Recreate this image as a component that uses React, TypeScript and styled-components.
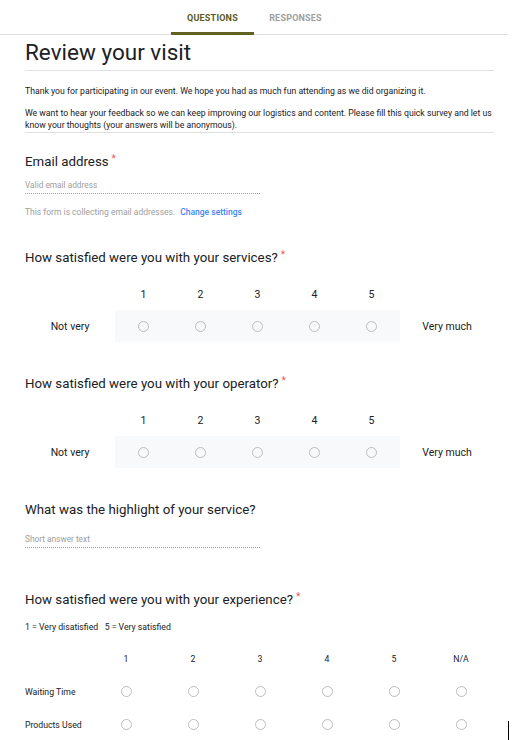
import React from "react";
import styled, { createGlobalStyle } from "styled-components";

const GlobalStyle = createGlobalStyle`
  body {
    margin: 0;
    background: #fff;
    font-family: Roboto, "Liberation Sans", Arial, sans-serif;
    color: #212121;
  }
`;

const Page = styled.div`
  width: 508px;
`;

const TabBar = styled.div`
  display: flex;
  justify-content: center;
  height: 34px;
  border-bottom: 1px solid #e0e0e0;
`;

const Tab = styled.div<{ $active?: boolean }>`
  width: 83px;
  display: flex;
  align-items: center;
  justify-content: center;
  font-size: 9px;
  font-weight: 700;
  letter-spacing: 0.2px;
  color: ${(p) => (p.$active ? "#5b5b1e" : "#9e9e9e")};
  border-bottom: 3px solid ${(p) => (p.$active ? "#616122" : "transparent")};
  margin-bottom: -1px;
  padding-top: 3px;
`;

const Content = styled.div`
  padding: 0 14px 0 25px;
`;

const Title = styled.h1`
  margin: 0;
  font-size: 22.5px;
  font-weight: 400;
  line-height: 33px;
  padding-top: 1px;
  padding-bottom: 1px;
  border-bottom: 1px solid #e0e0e0;
  color: #202124;
`;

const Description = styled.div`
  font-size: 8.7px;
  line-height: 12px;
  color: #202124;
  padding: 14px 0 1px;
  border-bottom: 1px solid #e0e0e0;

  p {
    margin: 0 0 10px;
  }
  p:last-child {
    margin-bottom: 0;
  }
`;

const Question = styled.div<{ $top: number }>`
  padding-top: ${(p) => p.$top}px;
`;

const QTitle = styled.div`
  font-size: 13.3px;
  line-height: 18px;
  color: #202124;
`;

const Star = styled.span`
  color: #e35b5b;
  font-size: 10px;
  vertical-align: top;
  margin-left: 3px;
  position: relative;
  top: -3px;
`;

const ShortInput = styled.div<{ $gap: number }>`
  width: 235px;
  font-size: 8.3px;
  color: #9e9e9e;
  padding: ${(p) => p.$gap}px 0 3px;
  border-bottom: 1px dotted #9e9e9e;
`;

const Note = styled.div`
  font-size: 8.5px;
  color: #9e9e9e;
  margin-top: 13px;

  a {
    color: #4285f4;
    text-decoration: none;
    margin-left: 5px;
    font-weight: 500;
  }
`;

const Scale = styled.div`
  display: grid;
  grid-template-columns: 90px repeat(5, 57px) 1fr;
  row-gap: 6px;
  margin-top: 17px;
  font-size: 10.5px;
  color: #202124;
`;

const ScaleHead = styled.div`
  height: 20px;
  display: flex;
  align-items: center;
  justify-content: center;
`;

const ScaleCell = styled.div<{ $band?: boolean }>`
  height: 32px;
  display: flex;
  align-items: center;
  justify-content: center;
  background: ${(p) => (p.$band ? "#f8f9fa" : "transparent")};
`;

const Radio = styled.span`
  width: 11px;
  height: 11px;
  border: 1px solid #bdbdbd;
  border-radius: 50%;
  box-sizing: border-box;
  display: inline-block;
`;

const Hint = styled.div`
  font-size: 8.7px;
  color: #202124;
  margin-top: 13px;
`;

const Grid = styled.div`
  display: grid;
  grid-template-columns: 67.5px repeat(6, 67px);
  margin-top: 10px;
  font-size: 8.7px;
  color: #202124;
`;

const GridCell = styled.div<{ $left?: boolean }>`
  height: 33px;
  display: flex;
  align-items: center;
  justify-content: ${(p) => (p.$left ? "flex-start" : "center")};
`;

const Cursor = styled.div`
  position: absolute;
  left: 508px;
  top: 721px;
  width: 1px;
  height: 19px;
  background: #000;
`;

function LinearScale({ top, label }: { top: number; label: string }) {
  const cols = [1, 2, 3, 4, 5];
  return (
    <Question $top={top}>
      <QTitle>
        {label}
        <Star>*</Star>
      </QTitle>
      <Scale>
        <ScaleHead />
        {cols.map((c) => (
          <ScaleHead key={c}>{c}</ScaleHead>
        ))}
        <ScaleHead />
        <ScaleCell>Not very</ScaleCell>
        {cols.map((c) => (
          <ScaleCell key={c} $band>
            <Radio />
          </ScaleCell>
        ))}
        <ScaleCell>Very much</ScaleCell>
      </Scale>
    </Question>
  );
}

export default function App() {
  const gridCols = ["1", "2", "3", "4", "5", "N/A"];
  const gridRows = ["Waiting Time", "Products Used"];

  return (
    <Page>
      <GlobalStyle />
      <TabBar>
        <Tab $active>QUESTIONS</Tab>
        <Tab>RESPONSES</Tab>
      </TabBar>
      <Content>
        <Title>Review your visit</Title>
        <Description>
          <p>Thank you for participating in our event. We hope you had as much fun attending as we did organizing it.</p>
          <p>
            We want to hear your feedback so we can keep improving our logistics and content. Please fill this quick survey and let us
            know your thoughts (your answers will be anonymous).
          </p>
        </Description>

        <Question $top={20}>
          <QTitle>
            Email address
            <Star>*</Star>
          </QTitle>
          <ShortInput $gap={9}>Valid email address</ShortInput>
          <Note>
            This form is collecting email addresses.
            <a href="#">Change settings</a>
          </Note>
        </Question>

        <LinearScale top={32} label="How satisfied were you with your services?" />
        <LinearScale top={33} label="How satisfied were you with your operator?" />

        <Question $top={33}>
          <QTitle>What was the highlight of your service?</QTitle>
          <ShortInput $gap={15}>Short answer text</ShortInput>
        </Question>

        <Question $top={43}>
          <QTitle>
            How satisfied were you with your experience?
            <Star>*</Star>
          </QTitle>
          <Hint>1 = Very disatisfied&nbsp;&nbsp;&nbsp;5 = Very satisfied</Hint>
          <Grid>
            <GridCell />
            {gridCols.map((c) => (
              <GridCell key={c}>{c}</GridCell>
            ))}
            {gridRows.map((r) => (
              <React.Fragment key={r}>
                <GridCell $left>{r}</GridCell>
                {gridCols.map((c) => (
                  <GridCell key={c}>
                    <Radio />
                  </GridCell>
                ))}
              </React.Fragment>
            ))}
          </Grid>
        </Question>
      </Content>
      <Cursor />
    </Page>
  );
}
